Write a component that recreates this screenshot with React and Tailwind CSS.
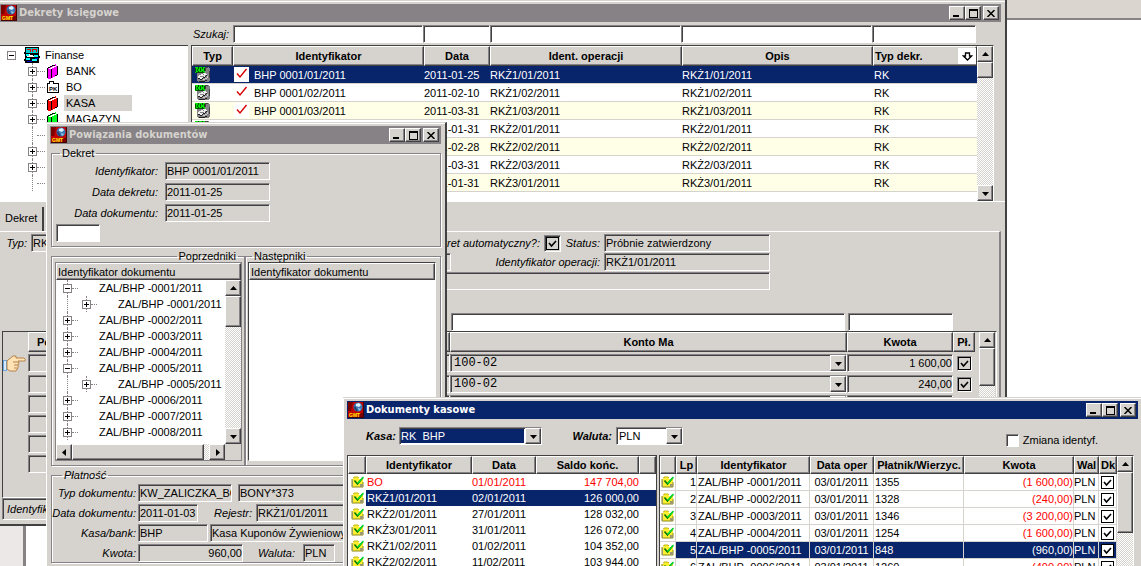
import React, { useState } from 'react';
import clsx from 'clsx';

const sunken =
    'border border-t-[#868286] border-l-[#868286] border-r-white border-b-white shadow-[inset_1px_1px_0_#424142]';
const raised =
    'border border-t-white border-l-white border-r-[#424142] border-b-[#424142] shadow-[inset_-1px_-1px_0_#868286]';
const group =
    'min-w-0 border border-[#868286] shadow-[1px_1px_0_#fff,inset_1px_1px_0_#fff]';
const track =
    'bg-[repeating-conic-gradient(#fff_0_25%,#d6d3ce_0_50%)] bg-[length:2px_2px]';

const entries = [
    { id: 'BHP 0001/01/2011', date: '2011-01-25', op: 'RKŻ1/01/2011' },
    { id: 'BHP 0001/02/2011', date: '2011-02-10', op: 'RKŻ1/02/2011' },
    { id: 'BHP 0001/03/2011', date: '2011-03-31', op: 'RKŻ1/03/2011' },
    { id: 'BHP 0002/01/2011', date: '2011-01-31', op: 'RKŻ2/01/2011' },
    { id: 'BHP 0002/02/2011', date: '2011-02-28', op: 'RKŻ2/02/2011' },
    { id: 'BHP 0002/03/2011', date: '2011-03-31', op: 'RKŻ2/03/2011' },
    { id: 'BHP 0003/01/2011', date: '2011-01-31', op: 'RKŻ3/01/2011' },
];

const linked = [
    { name: 'ZAL/BHP -0001/2011', open: true },
    { name: 'ZAL/BHP -0001/2011', child: true },
    { name: 'ZAL/BHP -0002/2011' },
    { name: 'ZAL/BHP -0003/2011' },
    { name: 'ZAL/BHP -0004/2011' },
    { name: 'ZAL/BHP -0005/2011', open: true },
    { name: 'ZAL/BHP -0005/2011', child: true },
    { name: 'ZAL/BHP -0006/2011' },
    { name: 'ZAL/BHP -0007/2011' },
    { name: 'ZAL/BHP -0008/2011' },
];

const reports = [
    { id: 'BO', date: '01/01/2011', amount: '147 704,00', red: true },
    { id: 'RKŻ1/01/2011', date: '02/01/2011', amount: '126 000,00' },
    { id: 'RKŻ2/01/2011', date: '27/01/2011', amount: '128 032,00' },
    { id: 'RKŻ3/01/2011', date: '31/01/2011', amount: '126 072,00' },
    { id: 'RKŻ1/02/2011', date: '01/02/2011', amount: '104 352,00' },
    { id: 'RKŻ2/02/2011', date: '11/02/2011', amount: '103 944,00' },
];

const documents = [
    { id: 'ZAL/BHP -0001/2011', payer: '1355', amount: '(1 600,00)' },
    { id: 'ZAL/BHP -0002/2011', payer: '1328', amount: '(240,00)' },
    { id: 'ZAL/BHP -0003/2011', payer: '1346', amount: '(3 200,00)' },
    { id: 'ZAL/BHP -0004/2011', payer: '1254', amount: '(1 600,00)' },
    { id: 'ZAL/BHP -0005/2011', payer: '848', amount: '(960,00)' },
    { id: 'ZAL/BHP -0006/2011', payer: '1260', amount: '(400,00)' },
];

const AppIcon = () => (
    <svg width="16" height="16" viewBox="0 0 16 16" className="shrink-0">
        <path d="M0 0h16v16H0z" fill="#c00000" />
        <path d="M0 0h5L3 9H0zM11 11h5v5h-5z" fill="#7b0000" />
        <path d="M15 0h1v16H0v-1h15z" fill="#400" />
        <circle cx="10" cy="5" r="4.5" fill="#3c78b4" />
        <path d="M8 2l3-1 2 2-2 2-3-1z" fill="#dff2ff" />
        <path d="M10 6l3 1-2 2z" fill="#9ccbe8" />
        <path d="M6 6l2 3h2l-3-5z" fill="#223f70" />
        <text x="1" y="15" fontSize="5" fontWeight="bold" fill="#ffef00" fontFamily="Liberation Sans, sans-serif">
            GMT
        </text>
    </svg>
);

const FinanceIcon = () => (
    <svg width="16" height="16" viewBox="0 0 16 16" shapeRendering="crispEdges">
        <path d="M1 0h14v16H1z" fill="#000" />
        <path d="M2 1h12v5H2z" fill="#0cc" />
        <path d="M3 2h4v1H3zM8 2h4v1H8zM6 3h1v2H6zM8 3h1v2H8zM12 2h1v3h-1z" fill="#e00" />
        <path d="M2 7h3v2H2zM10 8h4v2h-4zM2 11h4v2H2zM8 12h5v2H8z" fill="#0ff" />
        <path d="M5 7l5 2v1H5zM3 9h3v1H3z" fill="#fff" />
        <path d="M3 14h5v1H3zM11 11h3v1h-3z" fill="#00c" />
        <path d="M0 5h1v2H0zM15 9h1v2h-1zM0 12h1v2H0z" fill="#000" />
    </svg>
);

const BookIcon = ({ color }) => (
    <svg width="12" height="15" viewBox="0 0 12 15" shapeRendering="crispEdges">
        <path d="M0 4h1V3h2V2h2V1h3V0h1v2h2v9h-1v1H8v1H6v1H4v1H1v-1H0z" fill={color} />
        <path d="M0 4h1v10H0zM4 5h1v9H4zM1 3h2V2h2V1h3v1H5v1H3v1H1zM10 2h1v9h-1v1H8v-1h2z" fill="#000" />
        <path d="M2 4h2V3h2V2h3v1H7v1H5v1H2z" fill="#fff" />
    </svg>
);

const PkIcon = () => (
    <svg width="12" height="12" viewBox="0 0 12 12" shapeRendering="crispEdges">
        <path d="M.5 2.500h2v-2h4v2h5v9H.5z" fill="#fff" stroke="#000" />
        <text x="2" y="10" fontSize="6" fontWeight="bold" fontFamily="Liberation Sans, sans-serif">PK</text>
    </svg>
);

const MachineIcon = () => (
    <svg width="16" height="16" viewBox="0 0 16 16" shapeRendering="crispEdges">
        <path d="M2 0h12v1h1v13h-1v1H3v-1H2z" fill="#848284" />
        <path d="M10 0h3v1h-2v3h-1zM14 4h1v7h-1z" fill="#424142" />
        <path d="M0 0h10v6H0z" fill="#00e300" />
        <path d="M0 1h1v4H0zM2 2h1v2H2zM3 0h1v2H3zM3 4h1v1H3zM5 1h1v3H5zM7 0h1v2H7zM7 4h1v1H7zM9 1h1v3H9zM1 5h8v1H1z" fill="#004900" />
        <path d="M4 8h2V7h2V6h3v1h1v1h-1v1h-1v1H8v1H7v1H5v-1H3V9h1z" fill="#efefef" />
        <path d="M5 9h2v1H5zM8 7h1v1H8zM7 9h2v1H7zM10 8h1v1h-1z" fill="#848284" />
        <path d="M3 11h2v1H3zM5 12h2v1H5zM7 11h1v1H7zM8 10h2v1H8zM10 9h1v1h-1zM11 8h1v1h-1zM4 14h6v1H4zM10 13h2v1h-2z" fill="#212021" />
        <path d="M8 12h2v1H8zM10 11h2v1h-2zM12 9h1v2h-1z" fill="#cecfce" />
    </svg>
);

const FolderIcon = () => (
    <svg width="13" height="12" viewBox="0 0 13 12" className="mx-auto">
        <path d="M1 3h2V1h4l1 2h4v8H1z" fill="#ffef31" />
        <path d="M1 3v8h11V6" fill="none" stroke="#8c8a10" />
        <path d="M2 2h1V1h4l1 1" fill="none" stroke="#c6b610" />
        <path d="M1 4h1v7H1zM9 8h3v3H9z" fill="#9c9a6c" />
        <path d="M3.500 4.500l3 3.500L12 1.500" fill="none" stroke="#007500" strokeWidth="1.600" />
        <path d="M6.500 7.500L12.500 1" fill="none" stroke="#00e731" strokeWidth="1.200" />
    </svg>
);

const HandIcon = () => (
    <svg width="24" height="20" viewBox="0 0 24 20" className="mt-0.5">
        <path d="M0 6h4v11H0z" fill="#6ba6e0" />
        <path d="M1 7h2v9H1z" fill="#d6ebff" />
        <path d="M5 6l5-4h3v2h8q2 1 1 3h-7l1 2-1 2v3l-2 3H7l-3-2V7z" fill="#ffe3b5" stroke="#b5824a" />
        <path d="M10 8h5M11 11h4M11 14h3" stroke="#b5824a" fill="none" />
    </svg>
);

const RedTick = () => (
    <svg width="15" height="15" viewBox="0 0 15 15" className="bg-white">
        <path d="M3 6.500l3 3.500 6.500-8" fill="none" stroke="#d60000" strokeWidth="1.400" />
    </svg>
);

const Arrow = ({ dir = 'down' }) => {
    const paths = { up: 'M0 5h7L3.500 1z', down: 'M0 2h7L3.500 6z', left: 'M5 0v7L1 3.500z', right: 'M2 0v7l4-3.500z' };
    return (
        <svg width="7" height="7" viewBox="0 0 7 7" className="block">
            <path d={paths[dir]} fill="#000" />
        </svg>
    );
};

const ArrowButton = ({ dir, className }) => (
    <button aria-label={dir} className={clsx('flex size-4 shrink-0 items-center justify-center bg-[#d6d3ce]', raised, className)}>
        <Arrow dir={dir} />
    </button>
);

const VScroll = ({ thumb, end }) => (
    <div className={clsx('flex w-4 shrink-0 flex-col', track)}>
        <ArrowButton dir="up" />
        <div className={clsx('bg-[#d6d3ce]', raised, thumb)} />
        {end && <ArrowButton dir="down" className="mt-auto" />}
    </div>
);

const TitleBar = ({ title, active }) => (
    <div className={clsx('flex h-[18px] shrink-0 items-center gap-0.5 px-px', active ? 'bg-[#08246b] text-white' : 'bg-[#868286] text-[#d6d3ce]')}>
        <AppIcon />
        <h2 className="flex-1 truncate font-['DejaVu_Sans_Condensed','DejaVu_Sans',sans-serif] text-[11px] leading-4 font-bold">
            {title}
        </h2>
        <div className="flex pr-px">
            <button aria-label="Minimalizuj" className={clsx('flex h-[14px] w-4 items-end bg-[#d6d3ce] pb-0.5 pl-[3px]', raised)}>
                <span className="h-0.5 w-1.5 bg-black" />
            </button>
            <button aria-label="Maksymalizuj" className={clsx('flex h-[14px] w-4 items-center justify-center bg-[#d6d3ce]', raised)}>
                <span className="h-[9px] w-[9px] border border-t-2 border-black" />
            </button>
            <button aria-label="Zamknij" className={clsx('ml-0.5 flex h-[14px] w-4 items-center justify-center bg-[#d6d3ce]', raised)}>
                <svg width="8" height="7" viewBox="0 0 8 7">
                    <path d="M.5 0l7 7M7.500 0l-7 7" stroke="#000" strokeWidth="1.500" />
                </svg>
            </button>
        </div>
    </div>
);

const Field = ({ label, value = '', className, white }) => (
    <input
        aria-label={label}
        defaultValue={value}
        readOnly={!white}
        className={clsx('h-[18px] min-w-0 rounded-none pl-px text-[11px] outline-none', white ? 'bg-white' : 'bg-[#d6d3ce]', sunken, className)}
    />
);

const Select = ({ id, label, options, className, selectClass = 'bg-[#d6d3ce]' }) => (
    <div className={clsx('flex h-[18px] min-w-0', sunken, className)}>
        <select id={id} aria-label={label} className={clsx('m-px min-w-0 flex-1 appearance-none rounded-none leading-3 outline-none', selectClass)}>
            {options.map((o) => (
                <option key={o}>{o}</option>
            ))}
        </select>
        <span className={clsx('pointer-events-none flex w-4 items-center justify-center bg-[#d6d3ce]', raised)}>
            <Arrow />
        </span>
    </div>
);

const Check = ({ id, label, checked = true, edge = 'border border-black' }) => {
    const [on, setOn] = useState(checked);
    return (
        <span className="inline-grid size-[13px] shrink-0 place-items-center">
            <input
                id={id}
                type="checkbox"
                aria-label={label}
                checked={on}
                onChange={() => setOn(!on)}
                className={clsx('size-full appearance-none rounded-none bg-inherit [grid-area:1/1]', edge)}
            />
            {on && (
                <svg width="9" height="9" viewBox="0 0 9 9" className="pointer-events-none [grid-area:1/1]">
                    <path d="M1 4l2.500 3L8 2" fill="none" stroke="#000" strokeWidth="1.600" />
                </svg>
            )}
        </span>
    );
};

const Label = ({ children, className }) => (
    <span className={clsx('text-right whitespace-nowrap italic', className)}>{children}</span>
);

const Th = ({ children, className }) => (
    <th className={clsx('bg-[#d6d3ce] p-0 font-bold whitespace-nowrap', raised, className)}>{children}</th>
);

const Box = ({ open }) => (
    <svg width="9" height="9" viewBox="0 0 9 9" shapeRendering="crispEdges" className="[grid-area:1/1]">
        <path d="M.5 .5h8v8h-8z" fill="#fff" stroke="#868286" />
        <path d={open ? 'M2 4.500h5' : 'M2 4.500h5M4.500 2v5'} stroke="#000" />
    </svg>
);

// expand box with the dotted guide running behind it
const Node = ({ open, box = true, stub = 'w-2' }) => (
    <>
        <span className="grid h-4 w-[9px] shrink-0 place-items-center">
            <span className="h-4 border-l border-dotted border-[#868286] [grid-area:1/1]" />
            {box && <Box open={open} />}
        </span>
        <span className={clsx('h-0 shrink-0 border-t border-dotted border-[#868286]', stub)} />
    </>
);

const folders = [
    { name: 'BANK', icon: <BookIcon color="#ff00ff" />, box: true },
    { name: 'BO', icon: <PkIcon />, box: true },
    { name: 'KASA', icon: <BookIcon color="#ff0000" />, box: true, selected: true },
    { name: 'MAGAZYN', icon: <BookIcon color="#00ff21" />, box: true },
    { box: false },
    { box: true },
    { box: true },
    { box: false },
];

const FolderTree = () => (
    <ul className="w-[188px] shrink-0 overflow-hidden border-t border-[#424142] bg-white pt-px">
        <li className="flex h-4 items-center pl-[7px]">
            <Box open />
            <span className="mr-[5px] ml-2">
                <FinanceIcon />
            </span>
            Finanse
        </li>
        {folders.map(({ name, icon, box, selected }, i) => (
            <li key={i} className="flex h-4 items-center pl-7">
                <Node box={box} />
                <span className="ml-0.5 flex w-[17px] shrink-0">{icon}</span>
                <span className={clsx('h-4 pl-0.5 leading-4', selected && 'w-[68px] bg-[#d6d3ce]')}>{name}</span>
            </li>
        ))}
    </ul>
);

const EntriesTable = () => (
    <div className="mr-[11px] flex min-w-0 flex-1 overflow-hidden border border-t-[#424142] border-r-white border-b-0 border-l-[#424142] bg-white">
        <div className="min-w-0 flex-1">
            <table className="w-full table-fixed border-separate border-spacing-0">
                <colgroup>
                    <col className="w-[41px]" />
                    <col className="w-[191px]" />
                    <col className="w-[66px]" />
                    <col className="w-[192px]" />
                    <col className="w-[191px]" />
                    <col />
                </colgroup>
                <thead>
                    <tr className="h-5">
                        <Th>Typ</Th>
                        <Th>Identyfikator</Th>
                        <Th>Data</Th>
                        <Th>Ident. operacji</Th>
                        <Th>Opis</Th>
                        <Th className="text-left">
                            <span className="flex items-center justify-between pl-px">
                                Typ dekr.
                                <button aria-label="Sortuj" className="flex h-4 w-[18px] items-center justify-center bg-white">
                                    <svg width="11" height="9" viewBox="0 0 11 9">
                                        <path d="M3.500 1v3h-2l4 4 4-4h-2V1z" fill="#fff" stroke="#000" strokeWidth="1.300" />
                                    </svg>
                                </button>
                            </span>
                        </Th>
                    </tr>
                </thead>
                <tbody>
                    {entries.map((e, i) => (
                        <tr key={e.id} className={clsx('h-[18px] [&>td]:border-b [&>td]:border-[#d6d3ce] [&>td]:p-0', i === 0 ? 'bg-[#08246b] text-white' : i % 2 === 0 && 'bg-[#ffffe7]')}>
                            <td>
                                <span className="flex pl-[3px]">
                                    <MachineIcon />
                                </span>
                            </td>
                            <td>
                                <span className="flex items-center gap-[5px] pl-px">
                                    <RedTick />
                                    {e.id}
                                </span>
                            </td>
                            <td>{e.date}</td>
                            <td>{e.op}</td>
                            <td>{e.op}</td>
                            <td className="indent-px">RK</td>
                        </tr>
                    ))}
                </tbody>
            </table>
        </div>
        <VScroll thumb="h-4" end />
    </div>
);

const EntriesWindow = () => (
    <section className="absolute top-0 left-0 flex w-[1007px] flex-col border-r-2 border-b-2 border-[#424142] bg-[#d6d3ce] pt-px">
        <div className="border-t border-white pt-0.5 pr-1">
            <TitleBar title="Dekrety księgowe" />
        </div>
        <div className="flex items-center pt-[3px] pr-[29px]">
            <Label className="mr-1 w-[229px]">Szukaj:</Label>
            <Field white label="Szukaj identyfikatora" className="w-[190px]" />
            <Field white label="Szukaj daty" className="w-[67px]" />
            <Field white label="Szukaj operacji" className="w-[191px]" />
            <Field white label="Szukaj opisu" className="w-[191px]" />
            <Field white label="Szukaj typu" className="flex-1" />
        </div>
        <div className="mt-0.5 flex h-[156px] gap-[3px]">
            <FolderTree />
            <EntriesTable />
        </div>
        <div className="flex h-[30px] items-end border-t border-white">
            <button className="h-6 w-11 border-r-2 border-[#424142] pb-0.5 pl-[5px] text-left">Dekret</button>
        </div>
        <div className="mr-1 flex flex-col border-t border-r-2 border-t-white border-r-[#868286]">
            <div className="flex items-start pt-0.5">
                <Label className="w-[27px] pt-0.5">Typ:</Label>
                <Select label="Typ" options={['RK']} className="ml-1 w-[120px]" selectClass="bg-[#d6d3ce] text-[11px]" />
                <div className="ml-auto flex w-[470px] flex-col gap-px">
                    <div className="flex items-center">
                        <Label className="w-[240px]">Dekret automatyczny?:</Label>
                        <span className={clsx('ml-1 flex p-px', sunken)}>
                            <Check label="Dekret automatyczny" />
                        </span>
                        <Label className="ml-auto pr-1">Status:</Label>
                        <Field label="Status" value="Próbnie zatwierdzony" className="w-[166px]" />
                    </div>
                    <div className="flex items-center">
                        <Field label="Numer" className="w-[151px]" />
                        <Label className="ml-auto pr-1">Identyfikator operacji:</Label>
                        <Field label="Identyfikator operacji" value="RKŻ1/01/2011" className="w-[166px]" />
                    </div>
                    <Field label="Opis" className="w-full" />
                </div>
                <div className="w-[229px]" />
            </div>
            <div className="mt-[23px] flex gap-[3px] pr-[46px] pl-[451px]">
                <Field white label="Szukaj konta" className="flex-1" />
                <Field white label="Szukaj kwoty" className="w-[105px]" />
            </div>
            <div className="mr-0.5 ml-0.5 flex h-[167px] overflow-hidden border border-t-[#424142] border-r-white border-b-white border-l-[#424142]">
                <table className="h-fit flex-1 table-fixed border-separate border-spacing-0">
                    <colgroup>
                        <col className="w-[25px]" />
                        <col className="w-[422px]" />
                        <col />
                        <col className="w-[106px]" />
                        <col className="w-[22px]" />
                    </colgroup>
                    <thead>
                        <tr className="h-5">
                            <td />
                            <Th className="pl-2 text-left">Podmiot</Th>
                            <Th>Konto Ma</Th>
                            <Th>Kwota</Th>
                            <Th>Pł.</Th>
                        </tr>
                    </thead>
                    <tbody>
                        {['1 600,00', '240,00', '3 200,00', '1 600,00', '960,00', '400,00'].map((amount, i) => (
                            <tr key={i} className="h-5 [&>td]:p-0">
                                <td>{i === 0 && <HandIcon />}</td>
                                <td>
                                    <Field label="Podmiot" className="block w-full" />
                                </td>
                                <td>
                                    <Select label="Konto Ma" options={['100-02']} className="w-full" selectClass="bg-[#d6d3ce] pl-0.5 font-['Liberation_Mono',monospace] text-[12px]" />
                                </td>
                                <td>
                                    <Field label="Kwota" value={amount} className="block w-full text-right" />
                                </td>
                                <td>
                                    <span className={clsx('ml-1 flex w-fit', sunken)}>
                                        <Check label="Płatność" />
                                    </span>
                                </td>
                            </tr>
                        ))}
                    </tbody>
                </table>
                <div className="mr-px ml-1 flex">
                    <VScroll thumb="h-[38px]" />
                </div>
            </div>
            <div className={clsx('mr-1 mb-1 ml-0.5 flex h-[22px] items-center pl-1', sunken)}>
                <span className="w-10 overflow-hidden italic">Identyfikator:</span>
            </div>
        </div>
    </section>
);

const LinksWindow = () => (
    <section className="absolute top-[122px] left-[46px] flex w-[401px] flex-col border-t border-r-2 border-t-[#d6d3ce] border-r-[#424142] bg-[#d6d3ce]">
        <div className="flex flex-col border-t border-l border-white pt-0.5 pr-1 pb-6 pl-[3px]">
            <TitleBar title="Powiązania dokumentów" />
            <fieldset className={clsx('mt-[3px] ml-px', group)}>
                <legend className="ml-2 px-0.5 leading-3">Dekret</legend>
                <div className="flex flex-col gap-[3px] pt-[3px]">
                    {[
                        ['Identyfikator:', 'BHP 0001/01/2011'],
                        ['Data dekretu:', '2011-01-25'],
                        ['Data dokumentu:', '2011-01-25'],
                    ].map(([label, value]) => (
                        <label key={label} className="flex items-center gap-[7px]">
                            <Label className="w-[106px]">{label}</Label>
                            <Field value={value} className="w-[105px]" />
                        </label>
                    ))}
                </div>
                <Field white label="Numer" className="mt-0.5 mb-1 ml-1 block w-11" />
            </fieldset>
            <div className="mt-[3px] ml-px flex">
                <fieldset className={clsx('w-[194px] pr-0.5 pb-1 pl-[3px]', group)}>
                    <legend className="mr-1 ml-auto px-0.5 leading-3">Poprzedniki</legend>
                    <div className="border border-[#868286]">
                        <div className={clsx('h-[17px] pl-px leading-4', raised)}>Identyfikator dokumentu</div>
                        <div className="flex h-[164px] bg-white">
                            <ul className="min-w-0 flex-1 overflow-hidden">
                                {linked.map((l, i) => (
                                    <li key={i} className="flex h-4 items-center pl-[7px] whitespace-nowrap">
                                        {l.child ? (
                                            <>
                                                <Node box={false} stub="w-0" />
                                                <span className="w-[10px]" />
                                                <Node stub="w-1.5" />
                                            </>
                                        ) : (
                                            <Node open={l.open} stub="w-1.5" />
                                        )}
                                        <span className="pl-[21px]">{l.name}</span>
                                    </li>
                                ))}
                            </ul>
                            <VScroll thumb="h-[31px]" end />
                        </div>
                        <div className="flex h-4">
                            <div className={clsx('flex flex-1', track)}>
                                <ArrowButton dir="left" />
                                <div className={clsx('w-[132px] bg-[#d6d3ce]', raised)} />
                                <ArrowButton dir="right" className="ml-auto" />
                            </div>
                            <div className="w-4" />
                        </div>
                    </div>
                </fieldset>
                <fieldset className={clsx('flex-1 pr-1 pb-1 pl-0.5', group)}>
                    <legend className="ml-1 px-0.5 leading-3">Następniki</legend>
                    <div className="border border-[#424142] border-r-white border-b-white">
                        <div className={clsx('h-[17px] pl-px leading-4', raised)}>Identyfikator dokumentu</div>
                        <div className="h-[180px] bg-white" />
                    </div>
                </fieldset>
            </div>
            <fieldset className={clsx('mt-[3px] ml-px', group)}>
                <legend className="ml-2.5 px-0.5 leading-3 italic">Płatność</legend>
                <div className="flex flex-col gap-0.5 pt-[3px] pr-1">
                    <div className="flex items-center">
                        <Label className="w-[84px]">Typ dokumentu:</Label>
                        <Field label="Typ dokumentu" value="KW_ZALICZKA_BONY" className="ml-0.5 w-[94px]" />
                        <Field label="Seria" value="BONY*373" className="ml-1.5 flex-1" />
                    </div>
                    <div className="flex items-center">
                        <Label className="w-[84px]">Data dokumentu:</Label>
                        <Field label="Data dokumentu" value="2011-01-03" className="ml-0.5 w-[60px]" />
                        <Label className="w-[54px]">Rejestr:</Label>
                        <Field label="Rejestr" value="RKŻ1/01/2011" className="ml-1 flex-1" />
                    </div>
                    <div className="flex items-center">
                        <Label className="w-[84px]">Kasa/bank:</Label>
                        <Field label="Kasa" value="BHP" className="ml-0.5 w-[70px]" />
                        <Field label="Nazwa kasy" value="Kasa Kuponów Żywieniowych" className="ml-0.5 flex-1" />
                    </div>
                    <div className="flex items-center">
                        <Label className="w-[84px]">Kwota:</Label>
                        <Field label="Kwota" value="960,00" className="ml-0.5 w-[105px] text-right" />
                        <Label className="w-[52px]">Waluta:</Label>
                        <Field label="Waluta" value="PLN" className="ml-2 w-8" />
                    </div>
                </div>
            </fieldset>
        </div>
    </section>
);

const CashWindow = () => (
    <section className="absolute top-[397px] right-0 flex h-[220px] w-[798px] flex-col border-t border-[#d6d3ce] bg-[#d6d3ce]">
        <div className="flex min-h-0 flex-1 flex-col border-t border-l border-white pt-0.5 pr-[3px] pl-[3px]">
            <TitleBar title="Dokumenty kasowe" active />
            <div className="flex h-9 items-center pr-10 pb-0.5">
                <label htmlFor="kasa" className="w-[49px] text-right font-bold italic">Kasa:</label>
                <Select id="kasa" options={['RK\u00a0\u00a0BHP']} className="ml-[3px] w-[143px] bg-white" selectClass="bg-[#08246b] text-[11px] text-white outline-1 -outline-offset-1 outline-dotted outline-white" />
                <label htmlFor="waluta" className="w-[70px] text-right font-bold italic">Waluta:</label>
                <Select id="waluta" options={['PLN']} className="ml-1 w-[67px] bg-white" selectClass="bg-white pl-px text-[11px]" />
                <div className="ml-auto flex items-center pt-2">
                    <span className="flex bg-white">
                        <Check id="zmiana" checked={false} edge={sunken} />
                    </span>
                    <label htmlFor="zmiana" className="pl-1 whitespace-nowrap">Zmiana identyf.</label>
                </div>
            </div>
            <div className="flex min-h-0 flex-1 gap-0.5">
                <div className="w-[310px] shrink-0 overflow-hidden border border-[#424142] bg-white">
                    <table className="w-full table-fixed border-separate border-spacing-0">
                        <colgroup>
                            <col className="w-[18px]" />
                            <col className="w-[106px]" />
                            <col className="w-[64px]" />
                            <col className="w-[103px]" />
                            <col />
                        </colgroup>
                        <thead>
                            <tr className="h-[18px]">
                                <Th />
                                <Th>Identyfikator</Th>
                                <Th>Data</Th>
                                <Th>Saldo końc.</Th>
                                <Th />
                            </tr>
                        </thead>
                        <tbody>
                            {reports.map((r, i) => (
                                <tr key={r.id} className={clsx('h-4 [&>td]:p-0 [&>td]:leading-4', i === 1 && 'bg-[#08246b] text-white', r.red && 'text-[#ff0000]')}>
                                    <td className="bg-white">
                                        <FolderIcon />
                                    </td>
                                    <td className="indent-px">{r.id}</td>
                                    <td>{r.date}</td>
                                    <td className="text-right">{r.amount}</td>
                                    <td />
                                </tr>
                            ))}
                        </tbody>
                    </table>
                </div>
                <div className="mr-1 flex min-w-0 flex-1 overflow-hidden border border-t-[#424142] border-r-white border-b-white border-l-[#424142] bg-white">
                    <div className="min-w-0 flex-1">
                        <table className="w-full table-fixed border-separate border-spacing-0">
                            <colgroup>
                                <col className="w-[16px]" />
                                <col className="w-[21px]" />
                                <col className="w-[113px]" />
                                <col className="w-[64px]" />
                                <col className="w-[90px]" />
                                <col />
                                <col className="w-[25px]" />
                                <col className="w-[18px]" />
                            </colgroup>
                            <thead>
                                <tr className="h-[18px]">
                                    <Th />
                                    <Th>Lp</Th>
                                    <Th>Identyfikator</Th>
                                    <Th>Data oper</Th>
                                    <Th>Płatnik/Wierzyc.</Th>
                                    <Th>Kwota</Th>
                                    <Th>Wal</Th>
                                    <Th>Dk</Th>
                                </tr>
                            </thead>
                            <tbody>
                                {documents.map((d, i) => (
                                    <tr
                                        key={d.id}
                                        className={clsx(
                                            'h-[17px] [&>td]:border-r [&>td]:border-b [&>td]:border-[#d6d3ce] [&>td]:p-0 [&>td]:leading-4 [&>td]:whitespace-nowrap',
                                            i === 4 && 'bg-[#08246b] text-white'
                                        )}
                                    >
                                        <td className="bg-white">
                                            <FolderIcon />
                                        </td>
                                        <td className="text-right">{i + 1}</td>
                                        <td className="indent-px">{d.id}</td>
                                        <td className="text-center">03/01/2011</td>
                                        <td className="indent-px">{d.payer}</td>
                                        <td className={clsx('text-right', i !== 4 && 'text-[#ff0000]')}>{d.amount}</td>
                                        <td>PLN</td>
                                        <td>
                                            <span className="ml-0.5 flex w-fit bg-white">
                                                <Check label="Dk" />
                                            </span>
                                        </td>
                                    </tr>
                                ))}
                            </tbody>
                        </table>
                    </div>
                    <VScroll thumb="h-[61px]" />
                </div>
            </div>
        </div>
    </section>
);

export default function App() {
    return (
        <main className="relative flex h-screen flex-col overflow-hidden bg-white font-['Liberation_Sans',Arial,sans-serif] text-[11px] leading-[14px] text-black">
            <div className="h-5 border-b-2 border-[#868286] bg-[#dbd5cf]" />
            <div className="w-[26px] flex-1 border-r-[3px] border-[#868286] bg-[#ede8e8]" />
            <EntriesWindow />
            <LinksWindow />
            <CashWindow />
        </main>
    );
}
